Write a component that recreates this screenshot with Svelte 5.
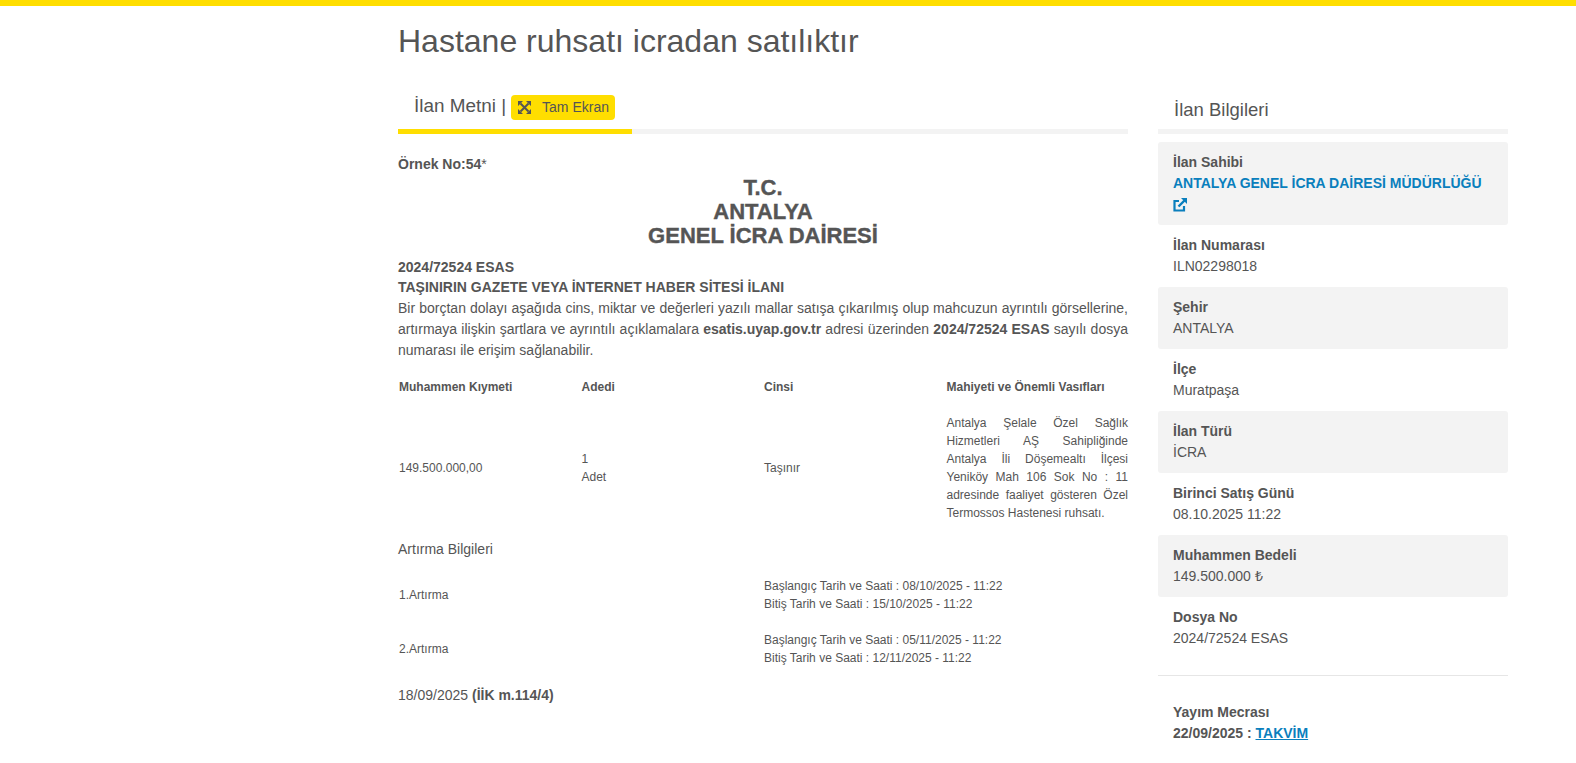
<script>
  const infoRows = [
    { label: "İlan Numarası", value: "ILN02298018" },
    { label: "Şehir", value: "ANTALYA", shaded: true },
    { label: "İlçe", value: "Muratpaşa" },
    { label: "İlan Türü", value: "İCRA", shaded: true },
    { label: "Birinci Satış Günü", value: "08.10.2025 11:22" },
    { label: "Muhammen Bedeli", value: "149.500.000 ₺", shaded: true },
    { label: "Dosya No", value: "2024/72524 ESAS" },
  ];

  const rounds = [
    { name: "1.Artırma", start: "08/10/2025 - 11:22", end: "15/10/2025 - 11:22" },
    { name: "2.Artırma", start: "05/11/2025 - 11:22", end: "12/11/2025 - 11:22" },
  ];
</script>

<div class="topbar"></div>

<div class="page">
  <h1>Hastane ruhsatı icradan satılıktır</h1>

  <div class="columns">
    <main>
      <div class="tabhead">
        <span class="tabtitle">İlan Metni |</span>
        <button class="fullscreen">
          <svg width="13" height="13" viewBox="0 0 13 13" fill="none" stroke="#555" aria-hidden="true">
            <path d="M2.500 2.500l8 8M10.500 2.500l-8 8" stroke-width="2" />
            <path d="M0 0h5L0 5zM13 0H8l5 5zM0 13h5L0 8zM13 13H8l5-5z" fill="#555" stroke="none" />
          </svg>
          <span>Tam Ekran</span>
        </button>
      </div>
      <div class="tabline"><div class="tabline-on"></div></div>

      <p class="sample"><b>Örnek No:54</b>*</p>
      <div class="court">
        <div>T.C.</div>
        <div>ANTALYA</div>
        <div>GENEL İCRA DAİRESİ</div>
      </div>

      <div class="notice">
        <div class="bold first">2024/72524 ESAS</div>
        <div class="bold">TAŞINIRIN GAZETE VEYA İNTERNET HABER SİTESİ İLANI</div>
        <p class="just">Bir borçtan dolayı aşağıda cins, miktar ve değerleri yazılı mallar satışa çıkarılmış olup mahcuzun ayrıntılı görsellerine, artırmaya ilişkin şartlara ve ayrıntılı açıklamalara <b>esatis.uyap.gov.tr</b> adresi üzerinden <b>2024/72524 ESAS</b> sayılı dosya numarası ile erişim sağlanabilir.</p>
      </div>

      <div class="goods heads">
        <div>Muhammen Kıymeti</div>
        <div>Adedi</div>
        <div>Cinsi</div>
        <div>Mahiyeti ve Önemli Vasıfları</div>
      </div>
      <div class="goods row">
        <div>149.500.000,00</div>
        <div>1<br />Adet</div>
        <div>Taşınır</div>
        <div class="desc">Antalya Şelale Özel Sağlık Hizmetleri AŞ Sahipliğinde Antalya İli Döşemealtı İlçesi Yeniköy Mah 106 Sok No : 11 adresinde faaliyet gösteren Özel Termossos Hastenesi ruhsatı.</div>
      </div>

      <div class="rounds-title">Artırma Bilgileri</div>
      {#each rounds as r}
        <div class="round">
          <div>{r.name}</div>
          <div>
            <div>Başlangıç Tarih ve Saati : {r.start}</div>
            <div>Bitiş Tarih ve Saati : {r.end}</div>
          </div>
        </div>
      {/each}

      <div class="date">18/09/2025 <b>(İİK m.114/4)</b></div>
    </main>

    <aside>
      <div class="side-title">İlan Bilgileri</div>
      <div class="side-line"></div>

      <div class="info shaded owner">
        <div class="label">İlan Sahibi</div>
        <a href="#owner" class="owner-link">
          ANTALYA GENEL İCRA DAİRESİ MÜDÜRLÜĞÜ
          <svg class="ext" width="14" height="14" viewBox="0 0 14 14" fill="none" stroke="#0a7fbd" aria-hidden="true">
            <path d="M6 3H1.500v9.500H11V8" stroke-width="2.200" />
            <path d="M5.500 8.500L12 2" stroke-width="2.400" />
            <path d="M8 0h6v6z" fill="#0a7fbd" stroke="none" />
          </svg>
        </a>
      </div>

      {#each infoRows as row}
        <div class="info" class:shaded={row.shaded}>
          <div class="label">{row.label}</div>
          <div class="value">{row.value}</div>
        </div>
      {/each}

      <hr />

      <div class="media">
        <div class="label">Yayım Mecrası</div>
        <div class="label">22/09/2025 : <a href="#takvim">TAKVİM</a></div>
      </div>
    </aside>
  </div>
</div>

<style>
  :global(body) {
    margin: 0;
    background: #fff;
    color: #555;
    font-family: "Liberation Sans", Arial, sans-serif;
    font-size: 14px;
    line-height: 21px;
  }
  .topbar {
    height: 6px;
    background: #ffde00;
  }
  .page {
    width: 1110px;
    margin-left: 398px;
  }
  h1 {
    margin: 0;
    padding-top: 17px;
    font-size: 32px;
    line-height: 36px;
    font-weight: 400;
  }
  .columns {
    display: flex;
    gap: 30px;
    margin-top: 32px;
  }
  main {
    width: 730px;
  }
  aside {
    width: 350px;
  }

  .tabhead {
    display: flex;
    align-items: center;
    gap: 5px;
    height: 28px;
    padding: 0 0 0 16px;
    margin-top: 2px;
  }
  .tabtitle {
    font-size: 18.900px;
    line-height: 24px;
    margin-bottom: 2px;
  }
  .fullscreen {
    display: flex;
    align-items: center;
    gap: 11px;
    height: 25px;
    padding: 0 6px 0 7px;
    border: 0;
    border-radius: 4px;
    background: #ffde00;
    color: #555;
    font: 14px "Liberation Sans", Arial, sans-serif;
  }
  .tabline {
    height: 5px;
    margin-top: 8px;
    background: #f3f3f3;
  }
  .tabline-on {
    width: 234px;
    height: 5px;
    background: #ffde00;
  }

  .sample {
    margin: 20px 0 0;
  }
  .court {
    margin-top: 1px;
    text-align: center;
    font-size: 22px;
    font-weight: 700;
    line-height: 24px;
    -webkit-text-stroke: 0.4px #555;
  }
  .notice {
    margin-top: 9px;
  }
  .bold {
    font-weight: 700;
  }
  .first {
    line-height: 20px;
  }
  .just {
    margin: 0;
    text-align: justify;
  }

  .goods {
    display: grid;
    grid-template-columns: repeat(4, 1fr);
    font-size: 12px;
    line-height: 18px;
  }
  .goods > div {
    padding-left: 1px;
  }
  .heads {
    margin-top: 17px;
    font-weight: 700;
  }
  .row {
    align-items: center;
    margin-top: 18px;
  }
  .desc {
    text-align: justify;
  }

  .rounds-title {
    margin-top: 17px;
  }
  .round {
    display: grid;
    grid-template-columns: 365px 1fr;
    align-items: center;
    font-size: 12px;
    line-height: 18px;
    padding-left: 1px;
    margin-top: 17px;
  }
  .round + .round {
    margin-top: 18px;
  }
  .date {
    margin-top: 18px;
  }

  .side-title {
    height: 27px;
    padding: 7px 0 0 16px;
    font-size: 18.500px;
    line-height: 24px;
  }
  .side-line {
    height: 5px;
    margin-top: 4px;
    background: #f3f3f3;
  }
  .info {
    padding: 10px 15px;
    height: 42px;
  }
  .owner {
    height: auto;
    margin-top: 8px;
  }
  .shaded {
    background: #f3f3f3;
    border-radius: 3px;
  }
  .label {
    font-weight: 700;
  }
  .owner-link {
    display: block;
    color: #0a7fbd;
    font-weight: 700;
    text-decoration: none;
  }
  .ext {
    display: block;
    margin-top: 4px;
    margin-bottom: 3px;
  }
  hr {
    border: 0;
    border-top: 1px solid #e6e6e6;
    margin: 16px 0 0;
  }
  .media {
    padding: 26px 15px 0;
  }
  .media a {
    color: #0a7fbd;
  }
</style>
